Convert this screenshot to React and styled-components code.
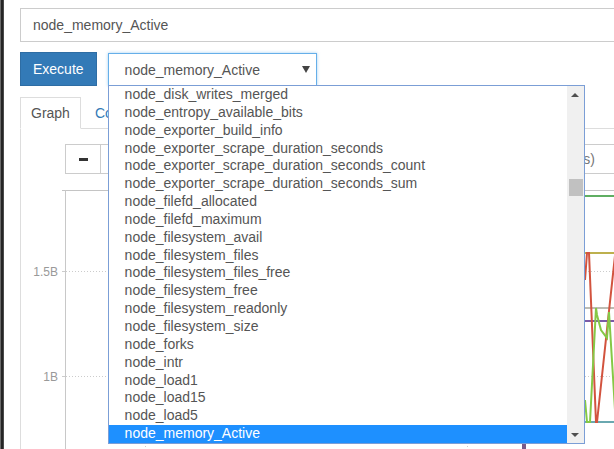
import React from 'react';
import styled, { createGlobalStyle } from 'styled-components';

const GlobalStyle = createGlobalStyle`
  html, body { margin: 0; padding: 0; background: #fff; overflow: hidden; }
  body { font-family: "Liberation Sans", Arial, sans-serif; font-size: 14px; color: #555; }
  * { box-sizing: border-box; }
`;

const metrics = [
  'node_disk_writes_merged',
  'node_entropy_available_bits',
  'node_exporter_build_info',
  'node_exporter_scrape_duration_seconds',
  'node_exporter_scrape_duration_seconds_count',
  'node_exporter_scrape_duration_seconds_sum',
  'node_filefd_allocated',
  'node_filefd_maximum',
  'node_filesystem_avail',
  'node_filesystem_files',
  'node_filesystem_files_free',
  'node_filesystem_free',
  'node_filesystem_readonly',
  'node_filesystem_size',
  'node_forks',
  'node_intr',
  'node_load1',
  'node_load15',
  'node_load5',
  'node_memory_Active',
];

const Page = styled.div`
  display: flex;
  width: 720px;
  height: 449px;
  overflow: hidden;
`;

const WindowEdge = styled.div`
  flex: 0 0 4px;
  background: linear-gradient(90deg, #6b6b6b 0 1px, #262626 1px 3px, #4a4a4a 3px 4px);
`;

const Main = styled.div`
  flex: 1;
  min-width: 0;
  padding: 8px 0 0 16px;
`;

const ExprInput = styled.div`
  height: 34px;
  border: 1px solid #ccc;
  padding: 6px 12px;
  line-height: 20px;
  color: #555;
`;

const ControlRow = styled.div`
  display: flex;
  align-items: flex-start;
  margin-top: 10px;
`;

const ExecuteButton = styled.button`
  height: 34px;
  padding: 6px 12px;
  border: 1px solid #2e6da4;
  background: #337ab7;
  color: #fff;
  font: 14px/20px "Liberation Sans", Arial, sans-serif;
`;

const SelectWrap = styled.div`
  position: relative;
  width: 209px;
  margin: 1px 0 0 11px;
  z-index: 5;
`;

const SelectBox = styled.div`
  height: 33px;
  border: 1px solid #66afe9;
  box-shadow: 0 0 3px rgba(102, 175, 233, 0.6);
  padding: 0 6px 0 16px;
  display: flex;
  align-items: center;
  justify-content: space-between;
  color: #555;
  background: #fff;
`;

const Caret = styled.span`
  width: 0;
  height: 0;
  border-left: 4px solid transparent;
  border-right: 4px solid transparent;
  border-top: 7px solid #444;
`;

const Dropdown = styled.div`
  position: absolute;
  top: 32px;
  left: 0;
  width: 477px;
  height: 359px;
  border: 1px solid #7b9ed6;
  background: #fff;
  display: flex;
`;

const Options = styled.div`
  flex: 1;
  display: flex;
  flex-direction: column;
  overflow: hidden;
`;

const Option = styled.div`
  flex: 0 0 17.85px;
  line-height: 17.85px;
  padding-left: 16px;
  white-space: nowrap;
  color: ${(p) => (p.$selected ? '#fff' : '#555')};
  background: ${(p) => (p.$selected ? '#1e90ff' : 'transparent')};
`;

const Scrollbar = styled.div`
  flex: 0 0 17px;
  background: #f0f0f0;
  display: flex;
  flex-direction: column;
`;

const ScrollArrow = styled.div`
  flex: 0 0 17px;
  display: flex;
  align-items: center;
  justify-content: center;
  &::after {
    content: '';
    border-left: 4px solid transparent;
    border-right: 4px solid transparent;
    ${(p) => (p.$up ? 'border-bottom: 4px solid #505050;' : 'border-top: 4px solid #505050;')}
  }
`;

const Thumb = styled.div`
  height: 17px;
  margin: 76px 1px 0 2px;
  background: #c1c1c1;
`;

const Spacer = styled.div`
  flex: 1;
`;

const TabList = styled.div`
  display: flex;
  margin-top: 11px;
  border-bottom: 1px solid #ddd;
`;

const Tab = styled.div`
  padding: 7px 10px 6px;
  line-height: 17px;
  margin: 0 3px -1px 0;
  border: 1px solid ${(p) => (p.$active ? '#ddd' : 'transparent')};
  border-bottom-color: ${(p) => (p.$active ? '#fff' : 'transparent')};
  background: ${(p) => (p.$active ? '#fff' : 'transparent')};
  color: ${(p) => (p.$active ? '#555' : '#337ab7')};
`;

const TabPanel = styled.div`
  border-left: 1px solid #ddd;
  padding-top: 15px;
`;

const GraphControls = styled.div`
  display: flex;
  margin-left: 44px;
  height: 30px;
`;

const CtrlButton = styled.div`
  width: 36px;
  height: 30px;
  border: 1px solid #ccc;
  background: #fff;
  display: flex;
  align-items: center;
  justify-content: center;
  color: #333;
  margin-left: ${(p) => p.$gap || 0}px;
`;

const MinusBar = styled.span`
  width: 9px;
  height: 3px;
  background: #333;
`;

const CtrlInput = styled.div`
  width: ${(p) => p.$w}px;
  height: 30px;
  border: 1px solid #ccc;
  border-left-width: ${(p) => (p.$joined ? 0 : 1)}px;
  padding: 0 12px;
  line-height: 28px;
  color: #777;
  margin-left: ${(p) => p.$gap || 0}px;
  white-space: nowrap;
`;

const Chart = styled.svg`
  display: block;
  margin-top: 16px;
  overflow: visible;
`;

function GraphChart() {
  const lbl = { fontFamily: '"Liberation Sans", Arial, sans-serif', fontSize: 12, fill: '#999' };
  return (
    <Chart width="620" height="260" viewBox="0 0 620 260">
      <line x1="41" y1="0.5" x2="620" y2="0.5" stroke="#c4c4c4" />
      <line x1="44.5" y1="0" x2="44.5" y2="260" stroke="#c8c8c8" />
      <line x1="41" y1="81.5" x2="44" y2="81.5" stroke="#ccc" />
      <line x1="41" y1="186.5" x2="44" y2="186.5" stroke="#ccc" />
      <text x="37" y="85.5" textAnchor="end" style={lbl}>1.5B</text>
      <text x="37" y="190.5" textAnchor="end" style={lbl}>1B</text>
      <line x1="45" y1="81.5" x2="620" y2="81.5" stroke="#ccc" strokeDasharray="1 2" />
      <line x1="45" y1="186.5" x2="620" y2="186.5" stroke="#ccc" strokeDasharray="1 2" />
      <line x1="124.5" y1="1" x2="124.5" y2="260" stroke="#ccc" strokeDasharray="1 2" />
      <line x1="446.5" y1="1" x2="446.5" y2="260" stroke="#ccc" strokeDasharray="1 2" />
      <line x1="100" y1="6" x2="620" y2="6" stroke="#5fae62" strokeWidth="2" />
      <line x1="100" y1="63" x2="620" y2="63" stroke="#bdb04e" strokeWidth="2" />
      <line x1="100" y1="118" x2="620" y2="118" stroke="#bcbcb4" strokeWidth="2" />
      <line x1="100" y1="131" x2="620" y2="131" stroke="#7a5aa6" strokeWidth="2" />
      <line x1="100" y1="232" x2="620" y2="232" stroke="#6aa8b0" strokeWidth="2" />
      <line x1="503" y1="252" x2="503" y2="262" stroke="#7a5a8a" strokeWidth="4" />
      <polyline
        points="564,90 566,63 568,63 575,232 576,232 600,10 605,-10"
        fill="none"
        stroke="#d2533e"
        strokeWidth="2"
      />
      <polyline
        points="564,210 566,232 569,232 575,118 576,125 580,140 586,148 588,122 594,220"
        fill="none"
        stroke="#85c846"
        strokeWidth="2"
      />
    </Chart>
  );
}

export default function App() {
  return (
    <Page>
      <GlobalStyle />
      <WindowEdge />
      <Main>
        <ExprInput>node_memory_Active</ExprInput>
        <ControlRow>
          <ExecuteButton>Execute</ExecuteButton>
          <SelectWrap>
            <SelectBox>
              <span>node_memory_Active</span>
              <Caret />
            </SelectBox>
            <Dropdown>
              <Options>
                {metrics.map((m) => (
                  <Option key={m} $selected={m === 'node_memory_Active'}>{m}</Option>
                ))}
              </Options>
              <Scrollbar>
                <ScrollArrow $up />
                <Thumb />
                <Spacer />
                <ScrollArrow />
              </Scrollbar>
            </Dropdown>
          </SelectWrap>
        </ControlRow>
        <TabList>
          <Tab $active>Graph</Tab>
          <Tab>Console</Tab>
        </TabList>
        <TabPanel>
          <GraphControls>
            <CtrlButton><MinusBar /></CtrlButton>
            <CtrlInput $w={70} $joined />
            <CtrlButton />
            <CtrlButton $gap={10} />
            <CtrlInput $w={234} $joined />
            <CtrlButton />
            <CtrlInput $w={110} $gap={10}>Res. (s)</CtrlInput>
          </GraphControls>
          <GraphChart />
        </TabPanel>
      </Main>
    </Page>
  );
}
